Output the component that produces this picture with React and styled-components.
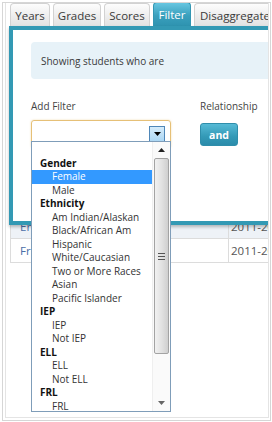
import React from "react";
import styled, { createGlobalStyle } from "styled-components";

const GlobalStyle = createGlobalStyle`
  html, body { margin: 0; padding: 0; background: #fff; }
  body { font-family: "Open Sans", "Noto Sans", Arial, sans-serif; color: #333; }
`;

const Frame = styled.div`
  box-sizing: border-box;
  margin: 2px 0 0 2px;
  width: 269px;
  height: 419px;
  border: 1px solid #d6d6d6;
  padding: 0 1px 2px 2px;
`;

const Inner = styled.div`
  box-sizing: border-box;
  position: relative;
  height: 100%;
  border: 1px solid #e4e4e4;
  border-top: none;
  overflow: hidden;
`;

const TabBar = styled.div`
  display: flex;
  gap: 3px;
  padding-left: 4px;
  height: 23px;
  align-items: flex-end;
`;

const Tab = styled.div`
  box-sizing: border-box;
  flex-shrink: 0;
  width: ${(p) => p.$w}px;
  height: ${(p) => (p.$active ? 24 : 23)}px;
  display: flex;
  align-items: center;
  justify-content: center;
  font-size: 11.5px;
  white-space: nowrap;
  border: 1px solid ${(p) => (p.$active ? "#3396b2" : "#d2d2d2")};
  border-bottom: none;
  border-radius: 4px 4px 0 0;
  color: ${(p) => (p.$active ? "#fff" : "#3a3a3a")};
  background: ${(p) =>
    p.$active
      ? "linear-gradient(#67c6e1, #3aa0bd 55%, #2e93b0)"
      : "linear-gradient(#fdfdfd, #ececec 60%, #e2e2e2)"};
`;

const Table = styled.div`
  margin: 189px 0 0 4px;
  border-left: 1px solid #dcdcdc;
`;

const Row = styled.div`
  display: flex;
  height: 23px;
  border-bottom: 1px solid #dcdcdc;
  background: ${(p) => (p.$shade ? "#eef2f7" : "#fff")};
  font-size: 11.5px;
`;

const Cell = styled.div`
  box-sizing: border-box;
  width: ${(p) => p.$w}px;
  flex-shrink: 0;
  display: flex;
  align-items: center;
  padding-left: ${(p) => p.$pl}px;
  color: ${(p) => p.$color};
  border-right: ${(p) => (p.$div ? "1px solid #dcdcdc" : "none")};
  white-space: nowrap;
  overflow: hidden;
`;

const Panel = styled.div`
  position: absolute;
  top: 23px;
  left: 3px;
  box-sizing: border-box;
  width: 300px;
  height: 199px;
  border: 4px solid #3399b4;
  background: #fff;
  box-shadow: 0 2px 3px rgba(0, 0, 0, 0.25);
  padding: 12px 0 0 18px;
`;

const InfoBox = styled.div`
  height: 37px;
  border-radius: 4px;
  background: #e7f2f8;
  display: flex;
  align-items: center;
  padding-left: 10px;
  font-size: 10px;
  color: #3a3a3a;
`;

const FormRow = styled.div`
  display: flex;
  gap: 29px;
  margin-top: 20px;
`;

const Group = styled.div`
  position: relative;
  display: flex;
  flex-direction: column;
`;

const Label = styled.div`
  font-size: 10px;
  color: #444;
  height: 14px;
  line-height: 14px;
  margin-bottom: ${(p) => p.$mb}px;
`;

const Select = styled.div`
  box-sizing: border-box;
  width: 140px;
  height: 28px;
  border: 1px solid #e6c077;
  border-radius: 3px;
  box-shadow: 0 0 2px rgba(230, 190, 110, 0.6);
  display: flex;
  align-items: center;
  justify-content: flex-end;
  padding-right: 5px;
`;

const ArrowBox = styled.div`
  box-sizing: border-box;
  width: 16px;
  height: 17px;
  border: 1px solid #4f87b8;
  background: linear-gradient(#d6ecfa, #a9d5f3);
  display: flex;
  align-items: center;
  justify-content: center;
`;

const AndButton = styled.div`
  box-sizing: border-box;
  width: 38px;
  height: 23px;
  border-radius: 3px;
  border: 1px solid #2f8eab;
  background: linear-gradient(#56bad6, #3399b6 60%, #2b8cab);
  color: #fff;
  font-weight: 700;
  font-size: 10.5px;
  display: flex;
  align-items: center;
  justify-content: center;
`;

const ListBox = styled.div`
  position: absolute;
  top: 42px;
  left: 0;
  box-sizing: border-box;
  width: 140px;
  height: 271px;
  border: 1px solid #7f9db9;
  background: #fff;
  display: flex;
  z-index: 5;
`;

const Options = styled.div`
  flex: 1;
  overflow: hidden;
  padding-top: 1px;
`;

const Option = styled.div`
  height: 13.5px;
  line-height: 13.5px;
  font-size: 10px;
  white-space: nowrap;
  padding-left: ${(p) => (p.$group ? 8 : 20)}px;
  font-weight: ${(p) => (p.$group ? 700 : 400)};
  color: ${(p) => (p.$sel ? "#fff" : p.$group ? "#111" : "#333")};
  background: ${(p) => (p.$sel ? "#3399ff" : "transparent")};
`;

const ScrollBar = styled.div`
  width: 17px;
  display: flex;
  flex-direction: column;
  background: #fafafa;
  border-left: 1px solid #efefef;
`;

const ScrollBtn = styled.div`
  height: 16px;
  display: flex;
  align-items: center;
  justify-content: center;
  flex-shrink: 0;
`;

const Track = styled.div`
  flex: 1;
  padding: 0 1px;
`;

const Thumb = styled.div`
  box-sizing: border-box;
  height: 196px;
  border: 1px solid #a3a3a3;
  border-radius: 2px;
  background: linear-gradient(90deg, #f1f1f1, #e2e2e2 50%, #cfcfcf);
  display: flex;
  align-items: center;
  justify-content: center;
`;

const Tri = ({ up, w = 7, h = 4, color = "#111" }) => (
  <svg width={w} height={h} viewBox={`0 0 ${w} ${h}`}>
    <polygon
      points={up ? `0,${h} ${w},${h} ${w / 2},0` : `0,0 ${w},0 ${w / 2},${h}`}
      fill={color}
    />
  </svg>
);

const Grip = () => (
  <svg width="7" height="7" viewBox="0 0 7 7">
    <rect x="0" y="0" width="7" height="1" fill="#555" />
    <rect x="0" y="3" width="7" height="1" fill="#555" />
    <rect x="0" y="6" width="7" height="1" fill="#555" />
  </svg>
);

const tabs = [
  { t: "Years", w: 40 },
  { t: "Grades", w: 48 },
  { t: "Scores", w: 46 },
  { t: "Filter", w: 38, active: true },
  { t: "Disaggregate", w: 82 },
];

const options = [
  { t: "" },
  { t: "Gender", g: true },
  { t: "Female", sel: true },
  { t: "Male" },
  { t: "Ethnicity", g: true },
  { t: "Am Indian/Alaskan" },
  { t: "Black/African Am" },
  { t: "Hispanic" },
  { t: "White/Caucasian" },
  { t: "Two or More Races" },
  { t: "Asian" },
  { t: "Pacific Islander" },
  { t: "IEP", g: true },
  { t: "IEP" },
  { t: "Not IEP" },
  { t: "ELL", g: true },
  { t: "ELL" },
  { t: "Not ELL" },
  { t: "FRL", g: true },
  { t: "FRL" },
];

export default function App() {
  return (
    <>
      <GlobalStyle />
      <Frame>
        <Inner>
          <TabBar>
            {tabs.map((x) => (
              <Tab key={x.t} $active={x.active} $w={x.w}>
                {x.t}
              </Tab>
            ))}
          </TabBar>
          <Table>
            <Row $shade>
              <Cell $w={218} $pl={9} $color="#4a6ea8" $div>
                En
              </Cell>
              <Cell $w={60} $pl={2} $color="#555">
                2011-20
              </Cell>
            </Row>
            <Row>
              <Cell $w={218} $pl={9} $color="#4a6ea8" $div>
                Fr
              </Cell>
              <Cell $w={60} $pl={2} $color="#555">
                2011-20
              </Cell>
            </Row>
          </Table>
          <Panel>
            <InfoBox>Showing students who are</InfoBox>
            <FormRow>
              <Group>
                <Label $mb={7}>Add Filter</Label>
                <Select>
                  <ArrowBox>
                    <Tri w={7} h={4} color="#000" />
                  </ArrowBox>
                </Select>
                <ListBox>
                  <Options>
                    {options.map((o, i) => (
                      <Option key={i} $group={o.g} $sel={o.sel}>
                        {o.t || "\u00a0"}
                      </Option>
                    ))}
                  </Options>
                  <ScrollBar>
                    <ScrollBtn>
                      <Tri up w={7} h={4} color="#222" />
                    </ScrollBtn>
                    <Track>
                      <Thumb>
                        <Grip />
                      </Thumb>
                    </Track>
                    <ScrollBtn>
                      <Tri w={7} h={4} color="#666" />
                    </ScrollBtn>
                  </ScrollBar>
                </ListBox>
              </Group>
              <Group>
                <Label $mb={10}>Relationship</Label>
                <AndButton>and</AndButton>
              </Group>
            </FormRow>
          </Panel>
        </Inner>
      </Frame>
    </>
  );
}
